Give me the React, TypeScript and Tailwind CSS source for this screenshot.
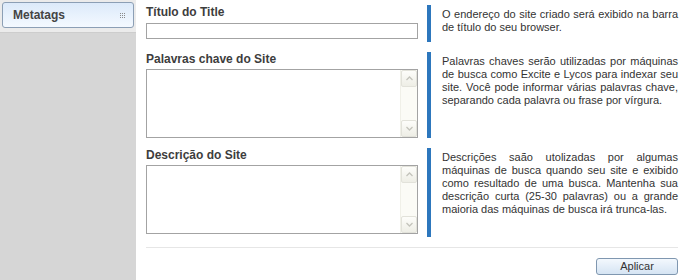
import React from "react";

const sections = [
  {
    label: "Título do Title",
    field: "input",
    height: "h-[37px]",
    lines: [
      "O endereço do site criado será exibido na barra",
      "de título do seu browser.",
    ],
  },
  {
    label: "Palavras chave do Site",
    field: "textarea",
    height: "h-[86px]",
    lines: [
      "Palavras chaves serão utilizadas por máquinas",
      "de busca como Excite e Lycos para indexar seu",
      "site. Você pode informar várias palavras chave,",
      "separando cada palavra ou frase por vírgura.",
    ],
  },
  {
    label: "Descrição do Site",
    field: "textarea",
    height: "h-[89px]",
    lines: [
      "Descrições saão utolizadas por algumas",
      "máquinas de busca quando seu site e exibido",
      "como resultado de uma busca. Mantenha sua",
      "descrição curta (25-30 palavras) ou a grande",
      "maioria das máquinas de busca irá trunca-las.",
    ],
  },
];

export default function App() {
  return (
    <div
      className="flex w-[682px] h-[280px] overflow-hidden bg-white"
      style={{ fontFamily: '"Liberation Sans", Arial, sans-serif' }}
    >
      {/* SIDEBAR */}
      <div className="w-[136px] shrink-0 bg-[#d6d6d6]">
        <div className="bg-[#ebebeb] px-[2px] pt-[2px] pb-[4px] border-b border-[#cdcdcd]">
          <div className="flex items-center justify-between h-[26px] pl-[10px] pr-[8px] rounded-[3px] border border-[#8c9fb5] bg-gradient-to-b from-[#dceafa] to-[#f4f9ff]">
            <span className="text-[12px] font-bold text-[#444]">Metatags</span>
            <Grip />
          </div>
        </div>
      </div>

      {/* MAIN */}
      <div className="flex-1 pl-[10px] pr-[4px] pt-[5px]">
        <div className="flex flex-col gap-[10px]">
          {sections.map((s) => (
            <div key={s.label} className={`flex ${s.height}`}>
              <div className="w-[272px] shrink-0">
                <div className="h-[14px] leading-[14px] text-[12px] font-bold text-[#3d3d3d]">
                  {s.label}
                </div>
                {s.field === "input" ? (
                  <input
                    type="text"
                    className="mt-[4px] block w-full h-[16px] border border-[#a3a3a3] bg-white outline-none"
                  />
                ) : (
                  <TextBox />
                )}
              </div>
              <div className="ml-[9px] w-[4px] shrink-0 bg-[#2d77bd]" />
              <div className="ml-[11px] w-[236px] pt-[3px] text-[11px] leading-[13px] text-[#333]">
                {s.lines.map((l, i) => (
                  <div
                    key={i}
                    className={
                      i < s.lines.length - 1
                        ? "whitespace-nowrap text-justify [text-align-last:justify]"
                        : "whitespace-nowrap"
                    }
                  >
                    {l}
                  </div>
                ))}
              </div>
            </div>
          ))}
        </div>

        <div className="mt-[10px] border-t border-[#e6e6e6]" />

        <div className="flex justify-end mt-[10px]">
          <button className="w-[82px] h-[17px] rounded-[3px] border border-[#7f97b0] bg-gradient-to-b from-[#f3f8fd] to-[#d5e4f3] text-[11px] leading-[15px] text-[#333]">
            Aplicar
          </button>
        </div>
      </div>
    </div>
  );
}

function TextBox() {
  return (
    <div className="mt-[3px] flex h-[69px] border border-[#a3a3a3] bg-white">
      <textarea className="flex-1 resize-none outline-none bg-white" />
      <div className="w-[17px] flex flex-col bg-[#fbfbf6] border-l border-[#f0f0e8]">
        <ScrollBtn dir="up" />
        <div className="flex-1" />
        <ScrollBtn dir="down" />
      </div>
    </div>
  );
}

function ScrollBtn({ dir }: { dir: "up" | "down" }) {
  return (
    <div className="h-[17px] flex items-center justify-center rounded-[2px] border border-[#e2e2da] bg-gradient-to-b from-[#fdfdfa] to-[#eeeee6]">
      <svg width="7" height="5" viewBox="0 0 7 5">
        <polyline
          points={dir === "up" ? "0.5,4 3.5,1 6.5,4" : "0.5,1 3.5,4 6.5,1"}
          fill="none"
          stroke="#c4c4bc"
          strokeWidth="1.3"
        />
      </svg>
    </div>
  );
}

function Grip() {
  return (
    <div className="grid grid-cols-3 gap-[1px]">
      {Array.from({ length: 9 }).map((_, i) => (
        <span key={i} className="block w-[1px] h-[1px] bg-[#8a8a8a]" />
      ))}
    </div>
  );
}
